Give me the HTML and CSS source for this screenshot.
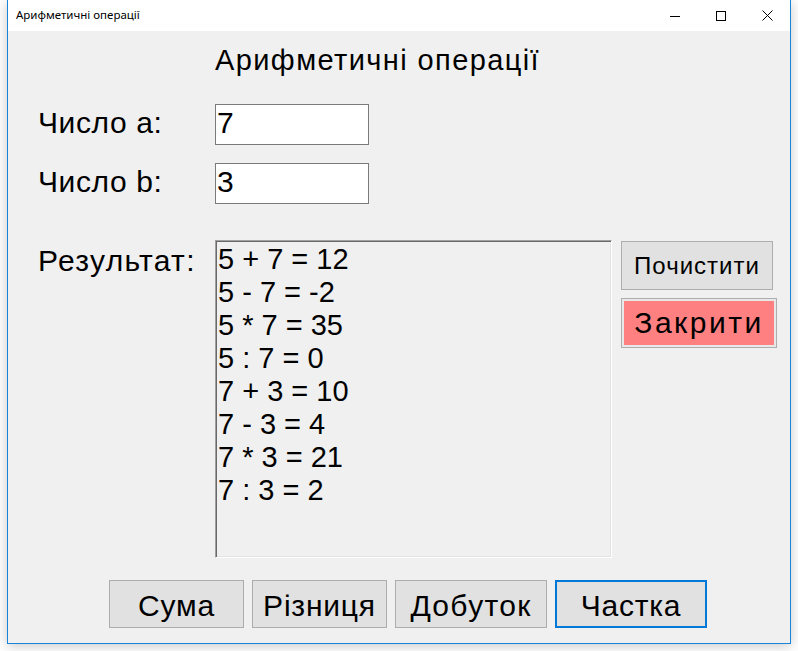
FILE: index.html
```html
<!DOCTYPE html>
<html lang="uk">
<head>
<meta charset="utf-8">
<title>Арифметичні операції</title>
<link rel="stylesheet" href="styles.css">
</head>
<body>
<div class="window">
  <div class="titlebar">
    <span class="title">Арифметичні операції</span>
    <div class="controls">
      <span class="ctl"><svg width="10" height="10" viewBox="0 0 10 10"><path d="M0 5.5H10" stroke="#000" stroke-width="1"/></svg></span>
      <span class="ctl"><svg width="10" height="10" viewBox="0 0 10 10"><rect x="0.5" y="0.5" width="9" height="9" fill="none" stroke="#000" stroke-width="1"/></svg></span>
      <span class="ctl"><svg width="11" height="11" viewBox="0 0 11 11"><path d="M0.5 0.5L10.5 10.5M10.5 0.5L0.5 10.5" stroke="#000" stroke-width="1"/></svg></span>
    </div>
  </div>
  <div class="client">
    <div class="row head-row">
      <div></div>
      <h1 class="heading">Арифметичні операції</h1>
    </div>
    <div class="row field-row first">
      <div class="lbl lbl-num">Число a:</div>
      <div class="textbox">7</div>
    </div>
    <div class="row field-row second">
      <div class="lbl lbl-num">Число b:</div>
      <div class="textbox">3</div>
    </div>
    <div class="row result-row">
      <div class="lbl lbl-res">Результат:</div>
      <div class="listbox">
        <div>5 + 7 = 12</div>
        <div>5 - 7 = -2</div>
        <div>5 * 7 = 35</div>
        <div>5 : 7 = 0</div>
        <div>7 + 3 = 10</div>
        <div>7 - 3 = 4</div>
        <div>7 * 3 = 21</div>
        <div>7 : 3 = 2</div>
      </div>
      <div class="side">
        <div class="btn btn-clear">Почистити</div>
        <div class="btn btn-close">Закрити</div>
      </div>
    </div>
    <div class="bottom">
      <div class="btn btn-big w135">Сума</div>
      <div class="btn btn-big w135">Різниця</div>
      <div class="btn btn-big w152 wide-text">Добуток</div>
      <div class="btn btn-big w152 focused">Частка</div>
    </div>
  </div>
</div>
</body>
</html>
```

FILE: styles.css
```css
html, body {
  margin: 0;
  padding: 0;
  background: #ffffff;
}
body {
  width: 798px;
  height: 651px;
  overflow: hidden;
  font-family: "Liberation Sans", Arial, sans-serif;
  color: #000;
}
.window {
  margin-left: 7px;
  width: 782px;
  height: 643px;
  border-left: 1px solid #1883d7;
  border-right: 1px solid #1883d7;
  border-bottom: 1px solid #1883d7;
  box-shadow: 0 2px 12px rgba(0, 0, 0, 0.22);
  display: flex;
  flex-direction: column;
  background: #f0f0f0;
}
.titlebar {
  height: 31px;
  background: #ffffff;
  display: flex;
  align-items: center;
  justify-content: space-between;
  flex: none;
}
.title {
  font-family: "Noto Sans", "Open Sans", sans-serif;
  font-size: 11.5px;
  padding-left: 8px;
  padding-bottom: 2px;
}
.controls {
  display: flex;
  height: 31px;
}
.ctl {
  width: 46px;
  height: 31px;
  display: flex;
  align-items: center;
  justify-content: center;
}
.client {
  flex: 1;
  padding-left: 30px;
  padding-top: 13px;
  display: flex;
  flex-direction: column;
}
.row {
  display: grid;
  grid-template-columns: 168px 397px 156px;
  column-gap: 9px;
}
.heading {
  margin: 0;
  font-weight: normal;
  font-size: 29px;
  line-height: 33px;
  letter-spacing: 1.4px;
  grid-column: 2 / 4;
}
.field-row {
  align-items: baseline;
}
.field-row.first { margin-top: 27px; }
.field-row.second { margin-top: 18px; }
.lbl {
  font-size: 30px;
  line-height: 33px;
}
.lbl-num { letter-spacing: 0.6px; }
.lbl-res { letter-spacing: 1.3px; }
.textbox {
  width: 151px;
  height: 33px;
  background: #ffffff;
  border: 1px solid #7a7a7a;
  padding: 1px 0 5px 1px;
  font-size: 30px;
  line-height: 33px;
}
.result-row {
  margin-top: 36px;
  align-items: start;
}
.result-row .lbl {
  margin-top: 4px;
}
.listbox {
  height: 314px;
  border-top: 1px solid #a0a0a0;
  border-left: 1px solid #a0a0a0;
  border-right: 1px solid #ffffff;
  border-bottom: 1px solid #ffffff;
  box-shadow: inset 1px 1px 0 #696969, inset -1px -1px 0 #e3e3e3;
  padding: 2px 0 0 2px;
  font-size: 29px;
  line-height: 33px;
}
.side {
  display: flex;
  flex-direction: column;
  align-items: flex-start;
  gap: 8px;
  padding-top: 1px;
}
.btn {
  box-sizing: border-box;
  border: 1px solid #adadad;
  background: #e1e1e1;
  display: flex;
  align-items: center;
  justify-content: center;
}
.btn-clear {
  width: 152px;
  height: 49px;
  font-size: 24px;
  letter-spacing: 1px;
}
.btn-close {
  width: 156px;
  height: 50px;
  font-size: 30px;
  letter-spacing: 2.5px;
  background: #ff8080;
  box-shadow: inset 0 0 0 2px #e8e8e8;
}
.bottom {
  display: flex;
  gap: 8px;
  margin-top: 22px;
  padding-left: 71px;
}
.btn-big {
  height: 48px;
  padding-top: 3px;
  font-size: 30px;
  letter-spacing: 0.8px;
}
.btn-big.wide-text { letter-spacing: 1.3px; }
.w135 { width: 135px; }
.w152 { width: 152px; }
.focused {
  border: 2px solid #0078d7;
}
```
